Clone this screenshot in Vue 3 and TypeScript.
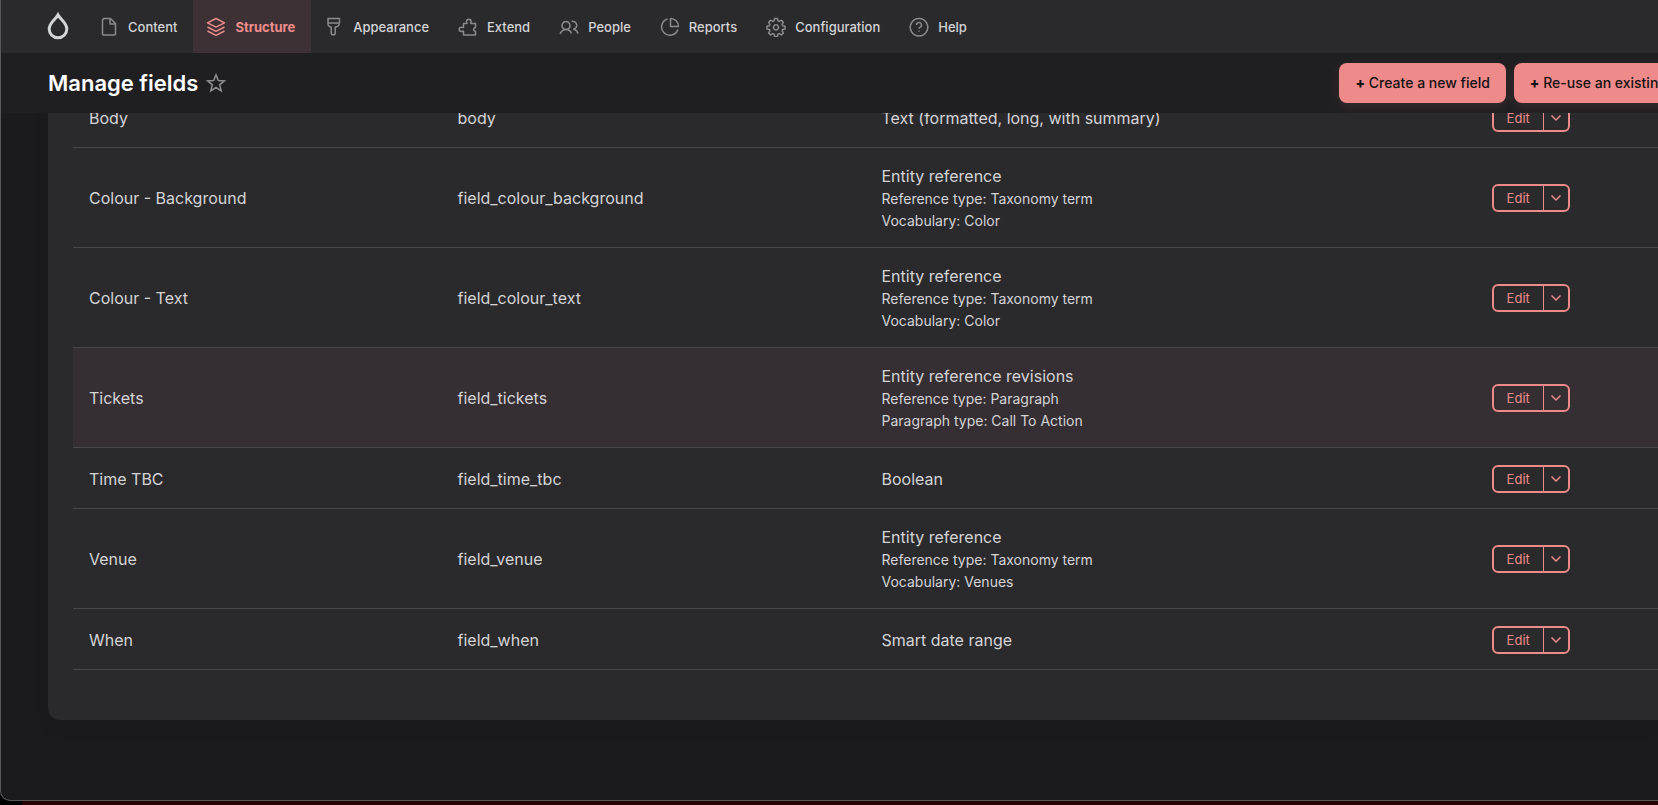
<script setup lang="ts">
interface NavItem {
  label: string
  paths: string[]
  active?: boolean
}

interface FieldRow {
  label: string
  machine: string
  type: string
  details: string[]
  highlighted?: boolean
}

const nav: NavItem[] = [
  { label: 'Content', paths: ['M4.5 1.5h7l5 5v10.500q0 1-1 1h-11q-1 0-1-1v-14q0-1 1-1z', 'M11 1.500v5.500h5.500'] },
  {
    label: 'Structure',
    active: true,
    paths: ['M10 1.500l8.500 4.300-8.500 4.300-8.500-4.300z', 'M1.500 10l8.500 4.300 8.500-4.300', 'M1.500 14l8.500 4.300 8.500-4.300'],
  },
  {
    label: 'Appearance',
    paths: ['M15.500 3.500v-2h-11.500v5.500q0 2 1.500 2.500l1.700.7v5.800q0 1.800 2 1.800t2-1.800v-5.800l2-.7q2-.6 2-2.500v-.5', 'M4 6h11.500v-2.500'],
  },
  {
    label: 'Extend',
    paths: ['M5.500 6.500h3.200c.8 0-.2-.9-.2-2a2.300 2.300 0 0 1 4.600 0c0 1.100-1 2-.2 2h4.600v3.700c0 .8-1.900.2-1.900 2.200s1.900 1.200 1.900 2.100v3.500h-12v-3.500c0-.9-1 0-2.200 0a2.100 2.100 0 0 1 0-4.300c1.200 0 2.200.9 2.200 0z'],
  },
  {
    label: 'People',
    paths: ['M7 4.500a4 4 0 1 0 .01 0z', 'M1 17q2-4.500 6-4.500t5.500 4', 'M12.500 4.500a4 4 0 1 1 1.500 7.800', 'M15 12.500q3 .5 4 4'],
  },
  { label: 'Reports', paths: ['M7.500 2a8.300 8.300 0 1 0 10.300 10.500', 'M10.500 1.500v8h8a8 8 0 0 0-8-8z'] },
  {
    label: 'Configuration',
    paths: [
      'M8.600 1.500h2.800l.5 2.300 1.500.6 2-1.200 2 2-1.300 2 .6 1.500 2.300.5v2.700l-2.300.5-.6 1.500 1.300 2-2 2-2-1.300-1.500.6-.5 2.300h-2.800l-.5-2.300-1.500-.6-2 1.300-2-2 1.300-2-.6-1.500-2.300-.5v-2.700l2.300-.5.6-1.500-1.300-2 2-2 2 1.200 1.500-.6z',
      'M10 7.700a2.600 2.600 0 1 0 .01 0z',
    ],
  },
  {
    label: 'Help',
    paths: ['M10 1.500a8.700 8.700 0 1 0 .01 0z', 'M7.500 8a2.500 2.500 0 1 1 3.600 2.200q-1.100.5-1.100 1.600', 'M10 13.700v1'],
  },
]

const taxonomy = (vocabulary: string): string[] => [
  'Reference type: Taxonomy term',
  `Vocabulary: ${vocabulary}`,
]

const rows: FieldRow[] = [
  { label: 'Body', machine: 'body', type: 'Text (formatted, long, with summary)', details: [] },
  { label: 'Colour - Background', machine: 'field_colour_background', type: 'Entity reference', details: taxonomy('Color') },
  { label: 'Colour - Text', machine: 'field_colour_text', type: 'Entity reference', details: taxonomy('Color') },
  {
    label: 'Tickets',
    machine: 'field_tickets',
    type: 'Entity reference revisions',
    details: ['Reference type: Paragraph', 'Paragraph type: Call To Action'],
    highlighted: true,
  },
  { label: 'Time TBC', machine: 'field_time_tbc', type: 'Boolean', details: [] },
  { label: 'Venue', machine: 'field_venue', type: 'Entity reference', details: taxonomy('Venues') },
  { label: 'When', machine: 'field_when', type: 'Smart date range', details: [] },
]
</script>

<template>
  <div class="desktop">
    <div class="window">
      <nav class="toolbar" aria-label="Administration">
        <a class="home" href="#" aria-label="Home">
          <svg width="26" height="30" viewBox="0 0 24 30">
            <path d="M12 4C10 8 3.200 11.500 3.200 18a8.800 8.800 0 0 0 17.600 0C20.800 11.500 14 8 12 4z" />
          </svg>
        </a>
        <a v-for="item in nav" :key="item.label" href="#" class="nav-item" :class="{ active: item.active }">
          <svg width="20" height="20" viewBox="0 0 20 20" aria-hidden="true">
            <path v-for="d in item.paths" :key="d" :d="d" />
          </svg>
          <span>{{ item.label }}</span>
        </a>
      </nav>

      <header class="page-header">
        <h1>Manage fields</h1>
        <button class="star" type="button" aria-label="Add to shortcuts">
          <svg width="20" height="20" viewBox="0 0 20 20">
            <path d="M10 1.800l2.300 5.700 6.100.4-4.700 3.900 1.500 6-5.200-3.300-5.200 3.300 1.500-6-4.700-3.900 6.100-.4z" />
          </svg>
        </button>
        <div class="actions">
          <button class="primary" type="button"><b>+</b> Create a new field</button>
          <button class="primary" type="button"><b>+</b> Re-use an existing field</button>
        </div>
      </header>

      <main class="content">
        <section class="card">
          <table>
            <colgroup>
              <col class="col-label" />
              <col class="col-machine" />
              <col class="col-type" />
              <col />
            </colgroup>
            <tbody>
              <tr v-for="row in rows" :key="row.machine" :class="{ highlighted: row.highlighted }">
                <td>{{ row.label }}</td>
                <td>{{ row.machine }}</td>
                <td>
                  <div>{{ row.type }}</div>
                  <div v-for="detail in row.details" :key="detail" class="detail">{{ detail }}</div>
                </td>
                <td>
                  <div class="dropbutton">
                    <a href="#">Edit</a>
                    <button type="button" aria-label="List additional actions">
                      <svg width="12" height="8" viewBox="0 0 12 8"><path d="M1.500 1.500L6 6l4.500-4.500" /></svg>
                    </button>
                  </div>
                </td>
              </tr>
            </tbody>
          </table>
        </section>
      </main>
    </div>
    <div class="backdrop"></div>
  </div>
</template>

<style>
body {
  background: #000;
}
</style>

<style scoped>
* {
  box-sizing: border-box;
}
.desktop {
  height: 100vh;
  display: flex;
  flex-direction: column;
  overflow: hidden;
  background: #000;
  font-family: Inter, "Liberation Sans", sans-serif;
  font-size: 16px;
  line-height: 24px;
  color: #d4d4d6;
}
.window {
  flex: 1;
  min-height: 0;
  display: flex;
  flex-direction: column;
  overflow: hidden;
  background: #1b1b1d;
  border: solid #57585a;
  border-width: 0 0 1px 1px;
  border-bottom-left-radius: 10px;
}
.backdrop {
  flex: none;
  height: 4px;
  margin-left: 22px;
  background: #260003;
}
a {
  color: inherit;
  text-decoration: none;
}
button {
  font: inherit;
  cursor: pointer;
}
svg {
  display: block;
  flex: none;
  fill: none;
  stroke: currentColor;
  stroke-linejoin: round;
}
.toolbar {
  flex: none;
  height: 53px;
  display: flex;
  padding-left: 44px;
  background: #2a2a2c;
  font-size: 13px;
  font-weight: 500;
}
.home {
  display: flex;
  align-items: center;
  width: 41px;
}
.home svg {
  margin-bottom: 2px;
  stroke: #d4d5d6;
  stroke-width: 3px;
  stroke-linejoin: miter;
}
.nav-item {
  display: flex;
  align-items: center;
  gap: 9px;
  padding: 0 16px 0 13px;
  white-space: nowrap;
}
.nav-item svg {
  color: #8b8b8d;
  stroke-width: 1.5px;
}
.nav-item.active {
  background: #3d3135;
  color: #ee8c8c;
  font-weight: 700;
}
.nav-item.active svg {
  color: #ee8c8c;
}
.page-header {
  position: relative;
  z-index: 1;
  flex: none;
  height: 60px;
  display: flex;
  align-items: center;
  gap: 8px;
  padding-left: 47px;
  background: #1f1f21;
}
h1 {
  margin: 0;
  font-size: 22px;
  line-height: 32px;
  font-weight: 600;
  color: #fff;
  white-space: nowrap;
}
.star {
  padding: 0;
  border: 0;
  background: none;
  color: #8e8e90;
}
.star svg {
  stroke-width: 1.5px;
  stroke-linejoin: miter;
}
.actions {
  display: flex;
  gap: 8px;
  margin-left: auto;
  margin-right: -58px;
}
.primary {
  height: 40px;
  padding: 0 16px;
  border: 0;
  border-radius: 8px;
  background: #ee8b8a;
  color: #111;
  font-size: 14px;
  font-weight: 500;
  white-space: nowrap;
  box-shadow: 0 4px 12px rgba(238, 139, 138, 0.12);
}
.primary b {
  font-weight: 800;
}
.content {
  flex: 1;
  min-height: 0;
  overflow: hidden;
  padding-left: 47px;
}
.card {
  margin-top: -26px;
  padding: 0 0 50px 25px;
  background: #2a2a2c;
  border-bottom-left-radius: 12px;
  box-shadow: 0 8px 16px rgba(0, 0, 0, 0.08);
}
table {
  width: 100%;
  table-layout: fixed;
  border-collapse: separate;
  border-spacing: 0;
}
.col-label {
  width: 23.25%;
}
.col-machine {
  width: 26.75%;
}
.col-type {
  width: 38.5%;
}
tr {
  height: 61px;
}
td {
  padding: 16px 16px 15px;
  border-bottom: 1px solid #47474a;
  vertical-align: middle;
}
.detail {
  font-size: 14px;
  line-height: 22px;
}
.highlighted {
  background: #352e32;
}
.dropbutton {
  display: flex;
  width: 78px;
  height: 28px;
  border: 2px solid #ee8b8a;
  border-radius: 6px;
  color: #ee8b8a;
  font-size: 13px;
}
.dropbutton a {
  flex: 1;
  text-align: center;
}
.dropbutton button {
  display: grid;
  place-items: center;
  width: 25px;
  padding: 0;
  border: 0;
  border-left: 1px solid #ee8b8a;
  background: none;
  color: inherit;
}
.dropbutton svg {
  stroke-width: 1.5px;
}
</style>
